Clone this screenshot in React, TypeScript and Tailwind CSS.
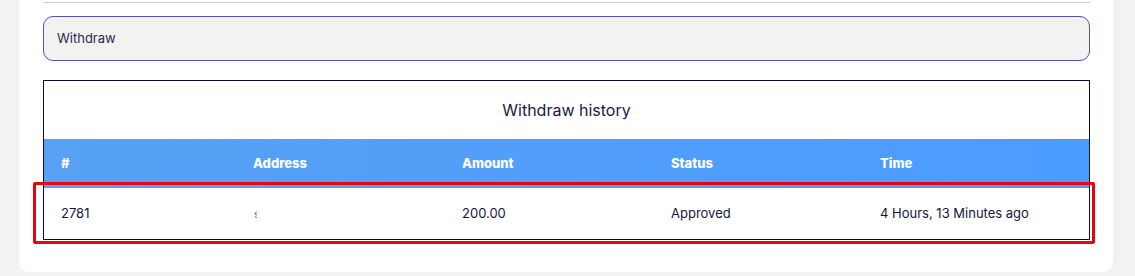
import React from "react";

const font = { fontFamily: "Poppins, Inter, 'Noto Sans', sans-serif" };

export default function App() {
  const cols = ["#", "Address", "Amount", "Status", "Time"];
  return (
    <div className="relative w-[1135px] h-[276px] bg-[#f2f2f2] overflow-hidden font-['Inter',sans-serif] text-[#16163a]">
      <div className="ml-[19px] w-[1094px] bg-white rounded-b-[10px] px-[24px] pt-[2px] pb-[32px]">
        <div className="h-px bg-[#cfcfcf] w-[1047px]" />
        <div className="mt-[13px] h-[45px] w-[1047px] rounded-[10px] border border-[#4b55bf] bg-[#f2f2f2] flex items-center pl-[13px] text-[13px] text-[#2a2a45]">
          Withdraw
        </div>
        <div className="mt-[19px] w-[1047px] border border-[#0b0b38]">
          <div className="h-[58px] flex items-center justify-center text-[16px] text-[#1a1a40]">
            Withdraw history
          </div>
          <div className="h-[49px] grid grid-cols-5 items-center bg-gradient-to-r from-[#58a1f4] to-[#4a9cff] text-white text-[13px] font-extrabold">
            {cols.map((c, i) => (
              <div key={c} className={i === 0 ? "pl-[17px]" : "pl-0"}>
                {c}
              </div>
            ))}
          </div>
          <div className="h-[51px] grid grid-cols-5 items-center text-[13px] text-[#16163a]">
            <div className="pl-[17px]">2781</div>
            <div className="pl-[1px]">
              <span className="inline-block w-[3px] overflow-hidden align-middle text-[#8a5a60] text-[10px] leading-none">s</span>
            </div>
            <div>200.00</div>
            <div>Approved</div>
            <div>4 Hours, 13 Minutes ago</div>
          </div>
        </div>
      </div>
      <div className="absolute left-[33px] top-[182px] w-[1062px] h-[62px] border-[3px] border-[#e30613] rounded-[2px] pointer-events-none" />
    </div>
  );
}
